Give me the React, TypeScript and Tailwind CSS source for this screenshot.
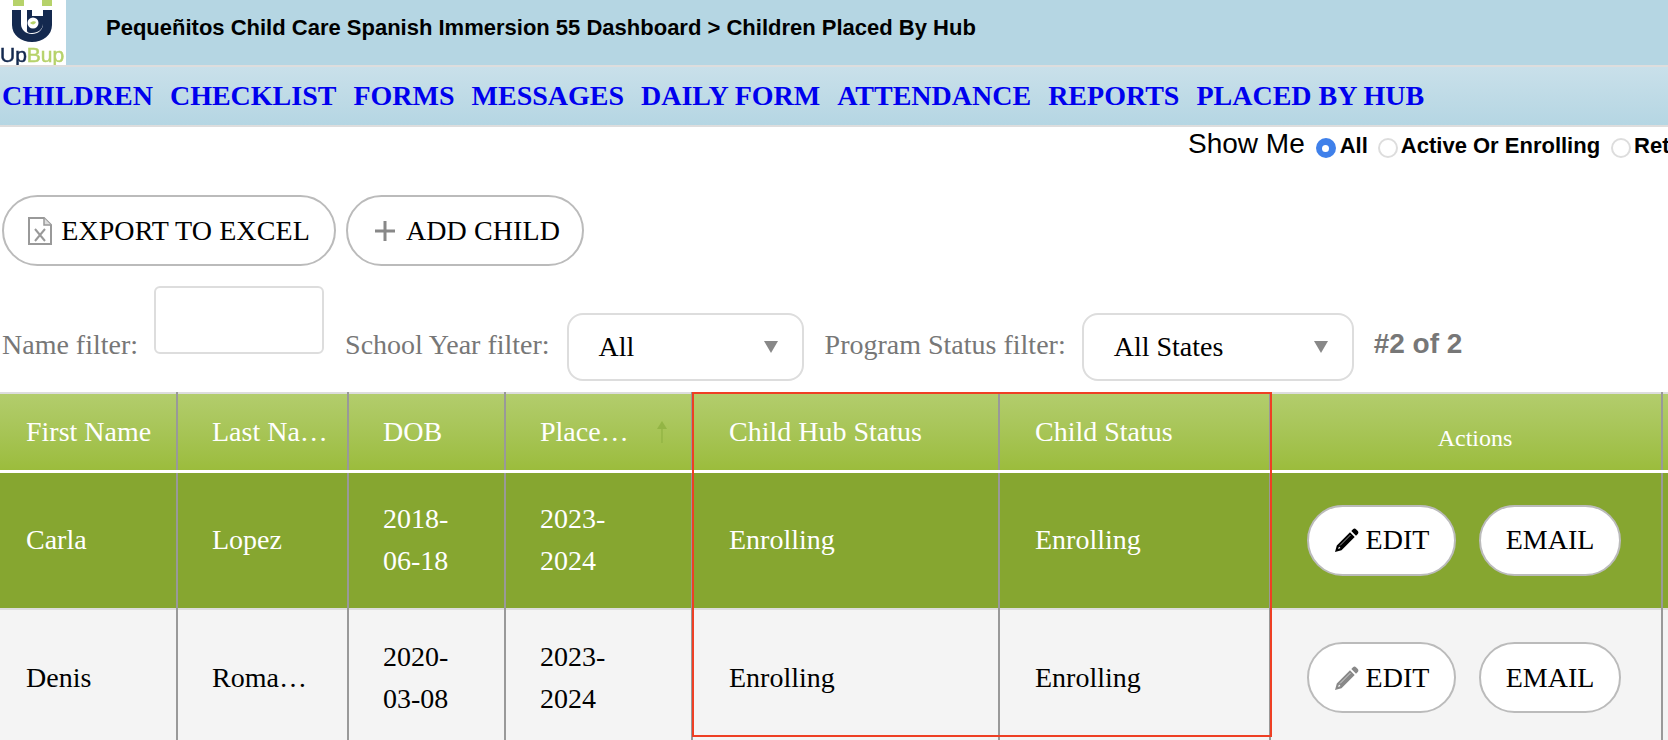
import React from "react";

const serif = "font-['Liberation_Serif',serif]";
const sans = "font-['Liberation_Sans',sans-serif]";

function Logo() {
  return (
    <div className="relative w-[66px] h-[65px] bg-white overflow-hidden shrink-0">
      <svg width="66" height="44" viewBox="0 0 66 44" className="block blur-[0.6px]">
        <rect x="13" y="0" width="11" height="6" fill="#b6d26a" />
        <rect x="42" y="0" width="10" height="6" fill="#b6d26a" />
        <path d="M12 10h9v14c0 6 5 10 11 10s11-4 11-10V10h9v15c0 10-9 17-20 17S12 35 12 25z" fill="#14294f" />
        <path d="M27 10h5v6h11v-6h0v14c0 5-5 9-11 9s-5-2-5-5z" fill="#14294f" />
        <path d="M33 11h5v3h-5z" fill="#fff" />
        <circle cx="33" cy="23" r="5.5" fill="#fff" />
        <path d="M30 23c2-2 5-2 6-1-1 3-4 3-6 1z" fill="#b6d26a" />
      </svg>
      <div className={`absolute left-0 top-[43px] text-[21px] leading-[24px] [-webkit-text-stroke:0.5px_currentColor] blur-[0.4px] whitespace-nowrap ${sans}`}>
        <span className="text-[#14294f]">Up</span>
        <span className="text-[#b6d26a]">Bup</span>
      </div>
    </div>
  );
}

function Pencil({ color }: { color: string }) {
  return (
    <svg width="26" height="26" viewBox="0 0 26 26" className="shrink-0">
      <path fill={color} d="M19 2.2c.9-.9 2.200-.9 3 0l1.800 1.800c.8.8.8 2.100 0 3L22 8.700 17.300 4zM16 5.300 20.700 10 7.500 23.200 1 25l1.800-6.500zM5 19.500l-.9 2.400 2.400-.9z" />
      <path stroke="#fff" strokeWidth="1" opacity="0.6" d="M16.500 8 6 18.500" />
    </svg>
  );
}

function PillButton({ children, className }: { children: React.ReactNode; className: string }) {
  return (
    <div className={`flex items-center justify-center h-[71px] rounded-[36px] border-2 border-[#bbb] bg-white text-[28px] text-black whitespace-nowrap ${serif} ${className}`}>
      {children}
    </div>
  );
}

function Radio({ checked }: { checked?: boolean }) {
  return checked ? (
    <span className="w-[20px] h-[20px] rounded-full bg-[#3f80ea] flex items-center justify-center shrink-0 mt-[10px]">
      <span className="w-[7px] h-[7px] rounded-full bg-white" />
    </span>
  ) : (
    <span className="w-[20px] h-[20px] rounded-full bg-white border-2 border-[#ddd] shrink-0 mt-[10px]" />
  );
}

function Select({ label, className }: { label: string; className: string }) {
  return (
    <div className={`flex items-center justify-between h-[68px] rounded-[16px] border-2 border-[#ddd] bg-white pl-[30px] pr-[24px] text-[28px] text-black ${className}`}>
      <span>{label}</span>
      <svg width="14" height="12" viewBox="0 0 14 12"><path d="M0 0h14L7 12z" fill="#888" /></svg>
    </div>
  );
}

function Th({ children, first }: { children: React.ReactNode; first?: boolean }) {
  return (
    <th className={`h-[78px] border-r-2 border-[#999] border-b-[3px] border-b-white font-normal text-left text-white text-[28px] ${first ? "pl-[26px]" : "pl-[34px]"} pr-[16px] truncate`}>
      {children}
    </th>
  );
}

function Td({ children, first, green }: { children: React.ReactNode; first?: boolean; green: boolean }) {
  return (
    <td className={`border-r-2 border-[#999] text-[28px] leading-[42px] ${first ? "pl-[26px]" : "pl-[34px]"} pr-[34px] ${green ? "text-white" : "text-black"}`}>
      {children}
    </td>
  );
}

function Row({ c, edit, green, h }: { c: string[]; edit: string; green: boolean; h: string }) {
  return (
    <tr className={`${h} ${green ? "bg-[#86a630] border-b-2 border-[#ddd]" : "bg-[#f4f4f4]"}`}>
      <Td first green={green}>{c[0]}</Td>
      <Td green={green}><span className="block truncate">{c[1]}</span></Td>
      <Td green={green}>{c[2]}<br />{c[3]}</Td>
      <Td green={green}>{c[4]}<br />{c[5]}</Td>
      <Td green={green}><span className="pl-[2px]">Enrolling</span></Td>
      <Td green={green}><span className="pl-[1px]">Enrolling</span></Td>
      <td className="border-r-2 border-[#999]">
        <div className="flex items-center gap-[23px] pl-[36px]">
          <PillButton className="w-[149px] gap-[6px]"><Pencil color={edit} />EDIT</PillButton>
          <PillButton className="w-[142px]">EMAIL</PillButton>
        </div>
      </td>
      <td />
    </tr>
  );
}

export default function App() {
  return (
    <div className={`w-[1668px] h-[740px] overflow-hidden bg-white ${serif}`}>
      <header className="flex h-[65px] bg-[#b5d6e3]">
        <Logo />
        <h1 className={`pl-[40px] pt-[15px] text-[22px] leading-[26px] font-bold text-black whitespace-nowrap ${sans}`}>
          Pequeñitos Child Care Spanish Immersion 55 Dashboard &gt; Children Placed By Hub
        </h1>
      </header>
      <nav className="flex items-center gap-[17px] h-[62px] pl-[2px] bg-gradient-to-b from-[#c9e0ea] to-[#b5d6e3] border-t-2 border-b-2 border-[#ddd] text-[28px] font-bold text-[#0000ee] whitespace-nowrap">
        {["CHILDREN", "CHECKLIST", "FORMS", "MESSAGES", "DAILY FORM", "ATTENDANCE", "REPORTS", "PLACED BY HUB"].map((n) => (
          <span key={n}>{n}</span>
        ))}
      </nav>

      <div className={`flex items-start h-[40px] pl-[1188px] pt-[1px] whitespace-nowrap ${sans}`}>
        <span className="text-[28px] leading-[32px] text-black mr-[11px]">Show Me</span>
        <Radio checked />
        <span className="text-[22px] leading-[36px] font-bold text-black ml-[4px] mr-[10px]">All</span>
        <Radio />
        <span className="text-[22px] leading-[36px] font-bold text-black ml-[3px] mr-[11px]">Active Or Enrolling</span>
        <Radio />
        <span className="text-[22px] leading-[36px] font-bold text-black ml-[3px]">Returning</span>
      </div>

      <div className="flex gap-[10px] pl-[2px] pt-[28px] tracking-[0.1px]">
        <PillButton className="w-[334px] gap-[9px]">
          <svg width="24" height="28" viewBox="0 0 24 28">
            <path d="M1 1h15l7 7v19H1z" fill="#fff" stroke="#999" strokeWidth="2" />
            <path d="M16 1v7h7" fill="#ddd" stroke="#999" strokeWidth="1.500" />
            <path d="M7 12l10 12M17 12L7 24" stroke="#999" strokeWidth="2" />
          </svg>
          EXPORT TO EXCEL
        </PillButton>
        <PillButton className="w-[238px] gap-[11px] pl-[5px]">
          <svg width="20" height="20" viewBox="0 0 20 20"><path d="M8.500 0h3v8.500H20v3h-8.500V20h-3v-8.500H0v-3h8.500z" fill="#888" /></svg>
          ADD CHILD
        </PillButton>
      </div>

      <div className="flex items-end h-[95px] mt-[20px] pl-[2px] text-[28px] text-[#777] whitespace-nowrap">
        <span className="mb-[15px]">Name filter:</span>
        <div className="w-[170px] h-[68px] ml-[16px] mb-[27px] rounded-[6px] border-2 border-[#ddd]" />
        <span className="ml-[21px] mb-[15px]">School Year filter:</span>
        <Select label="All" className="w-[237px] ml-[17px]" />
        <span className="ml-[21px] mb-[15px]">Program Status filter:</span>
        <Select label="All States" className="w-[272px] ml-[16px]" />
        <span className={`ml-[20px] mb-[16px] font-bold ${sans}`}>#2 of 2</span>
      </div>

      <div className="relative mt-[11px] w-[1668px]">
        <table className="table-fixed border-collapse w-[1700px] border-t-2 border-[#ddd]">
          <colgroup>
            <col className="w-[177px]" />
            <col className="w-[171px]" />
            <col className="w-[157px]" />
            <col className="w-[187px]" />
            <col className="w-[307px]" />
            <col className="w-[271px]" />
            <col className="w-[392px]" />
            <col className="w-[38px]" />
          </colgroup>
          <thead>
            <tr className="bg-gradient-to-b from-[#b3cd6d] to-[#9bbc3b]">
              <Th first>First Name</Th>
              <Th>Last Name</Th>
              <Th>DOB</Th>
              <th className="h-[78px] border-r-2 border-[#999] border-b-[3px] border-b-white font-normal text-left text-white text-[28px] pl-[34px]">
                <div className="flex items-center gap-[25px]">
                  <span className="block w-[90px] truncate">Placement Year</span>
                  <svg width="14" height="22" viewBox="0 0 14 22"><path d="M7 0l5 8H7.700v14H6.300V8H2z" fill="#93b545" /></svg>
                </div>
              </th>
              <Th><span className="pl-[2px]">Child Hub Status</span></Th>
              <Th><span className="pl-[1px]">Child Status</span></Th>
              <th className="border-r-2 border-[#999] border-b-[3px] border-b-white font-normal text-center text-white text-[24px] pt-[12px] pl-[18px]">Actions</th>
              <th className="border-b-[3px] border-b-white" />
            </tr>
          </thead>
          <tbody>
            <Row h="h-[138px]" green edit="#000" c={["Carla", "Lopez", "2018-", "06-18", "2023-", "2024"]} />
            <Row h="h-[136px]" green={false} edit="#888" c={["Denis", "Romanov", "2020-", "03-08", "2023-", "2024"]} />
          </tbody>
        </table>
        <div className="absolute left-[692px] top-0 w-[580px] h-[345px] border-2 border-[#ee3f24] pointer-events-none" />
      </div>
    </div>
  );
}
